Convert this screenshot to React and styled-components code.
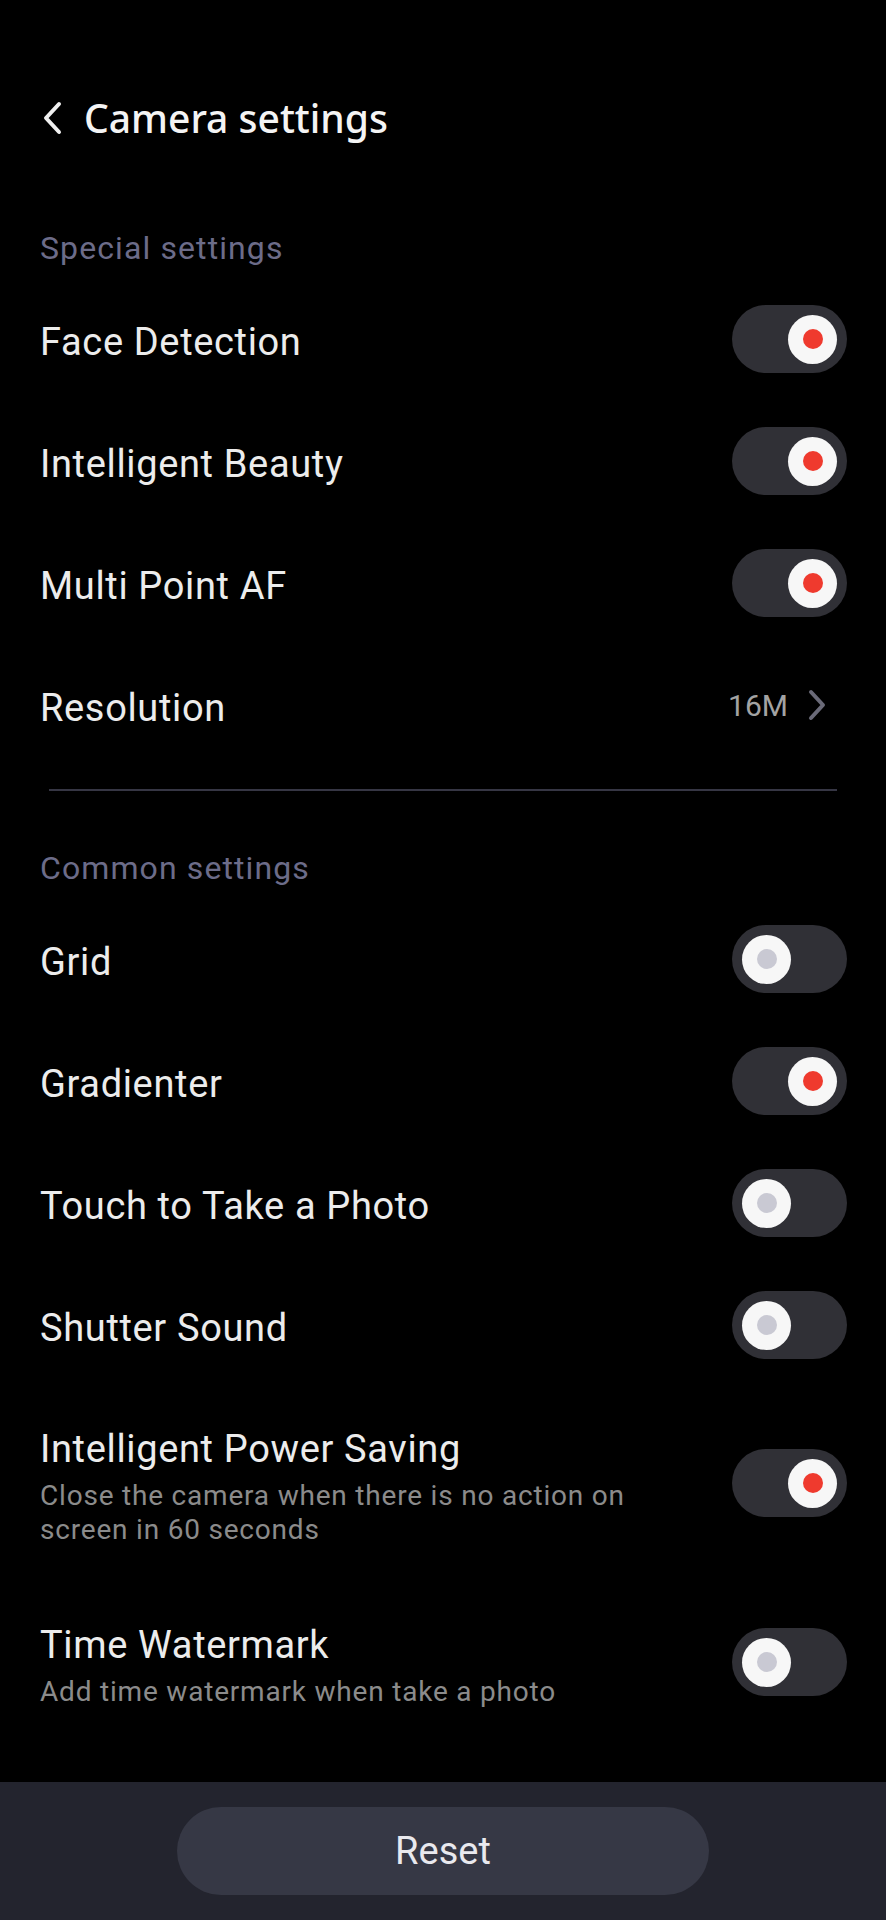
import React from "react";
import styled, { createGlobalStyle } from "styled-components";

const Global = createGlobalStyle`
  html, body { margin: 0; padding: 0; background: #000; }
  * { box-sizing: border-box; }
`;

const Page = styled.div`
  width: 886px;
  height: 1920px;
  background: #000;
  display: flex;
  flex-direction: column;
  font-family: Roboto, "Liberation Sans", sans-serif;
  color: #ebebeb;
`;

const Content = styled.div`
  flex: 1;
  padding: 78px 39px 0 40px;
  display: flex;
  flex-direction: column;
`;

const TopBar = styled.div`
  height: 80px;
  display: flex;
  align-items: center;
  gap: 20px;
  margin-bottom: 60px;
`;

const BackButton = styled.div`
  width: 24px;
  height: 34px;
  display: flex;
  align-items: center;
  justify-content: center;
`;

const Title = styled.h1`
  margin: 0;
  font-family: "Noto Sans", "Open Sans", sans-serif;
  font-weight: 500;
  font-size: 39px;
  line-height: 80px;
  color: #f4f4f4;
`;

const SectionLabel = styled.div`
  height: 60px;
  display: flex;
  align-items: center;
  font-size: 32px;
  letter-spacing: 1.1px;
  color: #6c6c89;
`;

const Row = styled.div`
  min-height: 122px;
  display: flex;
  align-items: center;
  justify-content: space-between;
  gap: 24px;
  padding: ${(p) => (p.$tall ? "41px 0 35px" : "0")};
`;

const Texts = styled.div`
  display: flex;
  flex-direction: column;
  gap: 8px;
  padding-top: ${(p) => (p.$tall ? "0" : "6px")};
`;

const Label = styled.div`
  font-size: 38px;
  letter-spacing: 0.65px;
  line-height: 44px;
  color: #ececec;
`;

const Sub = styled.div`
  font-size: 28px;
  letter-spacing: 0.8px;
  line-height: 34px;
  color: #8b8b8b;
  max-width: 620px;
`;

const Track = styled.div`
  width: 115px;
  height: 68px;
  border-radius: 34px;
  background: #303036;
  display: flex;
  align-items: center;
  justify-content: ${(p) => (p.$on ? "flex-end" : "flex-start")};
  padding: 0 10px;
  flex-shrink: 0;
  margin-bottom: ${(p) => (p.$raised ? "8px" : "0")};
`;

const Knob = styled.div`
  width: 49px;
  height: 49px;
  border-radius: 50%;
  background: #f7f7f7;
  display: flex;
  align-items: center;
  justify-content: center;
`;

const Dot = styled.div`
  width: 20px;
  height: 20px;
  border-radius: 50%;
  background: ${(p) => (p.$on ? "#ef3a2e" : "#c9c9d3")};
`;

const ValueGroup = styled.div`
  display: flex;
  align-items: center;
  gap: 20px;
  padding-right: 21px;
`;

const Value = styled.span`
  font-size: 30px;
  color: #a3a3a3;
`;

const Divider = styled.div`
  height: 2px;
  background: #363644;
  margin: 23px 10px 47px 9px;
`;

const BottomBar = styled.div`
  height: 138px;
  background: #23242e;
  display: flex;
  justify-content: center;
  padding-top: 25px;
`;

const ResetButton = styled.button`
  width: 532px;
  height: 88px;
  border: none;
  border-radius: 44px;
  background: #363845;
  color: #e9e9ee;
  font-family: Roboto, "Liberation Sans", sans-serif;
  font-size: 38px;
  padding: 0;
`;

const Toggle = ({ on, raised }) => (
  <Track $on={on} $raised={raised}>
    <Knob>
      <Dot $on={on} />
    </Knob>
  </Track>
);

const special = [
  { label: "Face Detection", on: true },
  { label: "Intelligent Beauty", on: true },
  { label: "Multi Point AF", on: true },
];

const common = [
  { label: "Grid", on: false },
  { label: "Gradienter", on: true },
  { label: "Touch to Take a Photo", on: false },
  { label: "Shutter Sound", on: false },
  {
    label: "Intelligent Power Saving",
    sub: "Close the camera when there is no action on screen in 60 seconds",
    on: true,
  },
  { label: "Time Watermark", sub: "Add time watermark when take a photo", on: false },
];

const SettingRow = ({ label, sub, on }) => (
  <Row $tall={!!sub}>
    <Texts $tall={!!sub}>
      <Label>{label}</Label>
      {sub && <Sub>{sub}</Sub>}
    </Texts>
    <Toggle on={on} raised={!!sub} />
  </Row>
);

export default function App() {
  return (
    <Page>
      <Global />
      <Content>
        <TopBar>
          <BackButton>
            <svg width="22" height="34" viewBox="0 0 22 34">
              <polyline
                points="18,3 5,17 18,31"
                fill="none"
                stroke="#f0f0f0"
                strokeWidth="4"
                strokeLinecap="round"
                strokeLinejoin="round"
              />
            </svg>
          </BackButton>
          <Title>Camera settings</Title>
        </TopBar>

        <SectionLabel>Special settings</SectionLabel>
        {special.map((s) => (
          <SettingRow key={s.label} {...s} />
        ))}
        <Row>
          <Texts>
            <Label>Resolution</Label>
          </Texts>
          <ValueGroup>
            <Value>16M</Value>
            <svg width="18" height="32" viewBox="0 0 18 32">
              <polyline
                points="3,3 15,16 3,29"
                fill="none"
                stroke="#6a6a78"
                strokeWidth="4"
                strokeLinecap="round"
                strokeLinejoin="round"
              />
            </svg>
          </ValueGroup>
        </Row>

        <Divider />

        <SectionLabel>Common settings</SectionLabel>
        {common.map((s) => (
          <SettingRow key={s.label} {...s} />
        ))}
      </Content>
      <BottomBar>
        <ResetButton>Reset</ResetButton>
      </BottomBar>
    </Page>
  );
}
